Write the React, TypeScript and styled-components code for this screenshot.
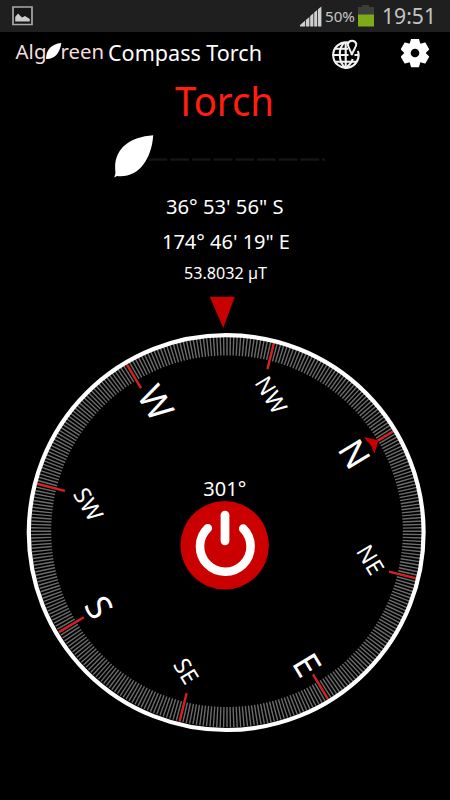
import React from "react";
import styled, { createGlobalStyle } from "styled-components";

const Global = createGlobalStyle`
  * { box-sizing: border-box; }
  body { margin: 0; background: #000; color: #fff; font-family: "Noto Sans", sans-serif; }
`;
const Screen = styled.main`
  width: 450px; height: 800px; overflow: hidden; background: #000;
  display: flex; flex-direction: column;
`;
const StatusBar = styled.div`
  height: 32px; background: #1f1f1f;
  display: flex; align-items: center; padding: 0 14px 0 12px; flex: none;
`;
const StatusIcons = styled.div`
  margin-left: auto; display: flex; align-items: center;
`;
const Label = styled.svg<{ $w: number; $h: number }>`
  display: block; flex: none; width: ${p => p.$w}px; height: ${p => p.$h}px; overflow: visible;
  font-family: "Noto Sans", sans-serif;
`;
const Icon = styled.svg<{ $w: number; $h: number }>`
  display: block; flex: none; width: ${p => p.$w}px; height: ${p => p.$h}px;
`;
const Battery = styled(Icon)`
  margin-left: 5px;
`;
const Header = styled.header`
  height: 44px; flex: none; display: flex; align-items: center; padding-left: 15px;
`;
const Brand = styled.div`
  display: flex; align-items: center; width: 94px; height: 44px; flex: none;
`;
const Actions = styled.div`
  margin-left: auto; display: flex; align-items: center; gap: 41px; padding-right: 20px;
`;
const Title = styled.h1`
  margin: 0; height: 52px; flex: none; font-weight: 400;
`;
const Slider = styled.div`
  height: 60px; flex: none; padding-left: 113px; display: flex;
`;
const Dial = styled.svg`
  display: block; width: 450px; height: 512px; flex: none;
  font-family: "Noto Sans", sans-serif;
`;

const TICK_CX = 227;
const TICK_CY = 531.2;
const HEADING = 301;
const DIRECTIONS = [
  { name: "N", x: 354.3, y: 454, size: 35, inner: 173 },
  { name: "NE", x: 370.3, y: 559.7, size: 23, inner: 167 },
  { name: "E", x: 307, y: 665, size: 35, inner: 167 },
  { name: "SE", x: 186, y: 671.2, size: 23, inner: 167 },
  { name: "S", x: 99, y: 607.2, size: 35, inner: 167 },
  { name: "SW", x: 88.3, y: 504.3, size: 23, inner: 167 },
  { name: "W", x: 155.7, y: 402.7, size: 36, inner: 167 },
  { name: "NW", x: 271, y: 395, size: 23, inner: 167 },
];

const spoke = (deg: number, r1: number, r2: number) => {
  const a = (deg * Math.PI) / 180;
  const s = Math.sin(a), c = Math.cos(a);
  return `M${TICK_CX + s * r1} ${TICK_CY - c * r1}L${TICK_CX + s * r2} ${TICK_CY - c * r2}`;
};
const TICKS = Array.from({ length: 360 }, (_, i) => spoke(i, 175.8, 196)).join("");

const Compass = () => (
  <Dial viewBox="0 288 450 512">
    <path d="M209.7 296.7H234.8L223.3 328Z" fill="#c90000" />
    <path d={TICKS} stroke="#6c6c6c" strokeWidth="1.4" fill="none" />
    {DIRECTIONS.map((d, i) => (
      <g key={d.name}>
        <path d={spoke(i * 45 + 360 - HEADING, d.inner, 196)} stroke="#d42222" strokeWidth="2.4" />
        <text
          transform={`translate(${d.x} ${d.y}) rotate(${360 - HEADING})`}
          y={d.size * 0.357} fontSize={d.size} textAnchor="middle" fill="#fff"
        >{d.name}</text>
      </g>
    ))}
    <circle cx="226.2" cy="532.6" r="197.4" fill="none" stroke="#fff" strokeWidth="4.2" />
    <path d="M363.6 437L378.6 440.2L374.3 453.5L371 445.5Z" fill="#c90000" />
    <text x="224.8" y="495.5" fontSize="20" textAnchor="middle" fill="#fff">{HEADING}°</text>
    <circle cx="224.7" cy="545.3" r="44.2" fill="#cb0000" />
    <path d="M207.8 528.2A25.3 25.3 0 1 0 243.2 528.6" fill="none" stroke="#fff" strokeWidth="8.6" strokeLinecap="round" />
    <path d="M225 515.2V540.8" stroke="#fff" strokeWidth="8.8" strokeLinecap="round" />
  </Dial>
);

const App = () => (
  <>
    <Global />
    <Screen>
      <StatusBar>
        <Icon $w={21} $h={20} viewBox="0 0 21 20">
          <path d="M1 1H20V18.5H1Z" fill="#161616" stroke="#aaa" strokeWidth="1.7" />
          <path d="M3.2 15.5V11L6 7.5L10 11.5L13 10L17.8 13V15.5Z" fill="#ccc" />
        </Icon>
        <StatusIcons>
          <Icon $w={22} $h={21} viewBox="0 0 22 21">
            <path d="M0 20.5V19L5 14.8V20.5ZM5.8 20.5V13.9L9.4 11V20.5ZM10.2 20.5V10.1L13.4 7.3V20.5ZM14.2 20.5V6.6L17.2 4V20.5ZM18 20.5V3.2L21.4 .4V20.5Z" fill="#cfcfcf" />
          </Icon>
          <Label $w={31} $h={32} viewBox="0 0 31 32">
            <text x="3" y="22" fontSize="15.3" textLength="30" lengthAdjust="spacingAndGlyphs" fill="#c4c4c4">50%</text>
          </Label>
          <Battery $w={16} $h={22} viewBox="0 0 16 22">
            <path d="M0 2H4V0H11V2H16V10H0Z" fill="#3d3d3d" />
            <path d="M0 9.5H16V21.5H0Z" fill="#7dab19" />
          </Battery>
          <Label $w={62} $h={32} viewBox="0 0 62 32">
            <text x="8" y="23.5" fontSize="22" textLength="54" lengthAdjust="spacingAndGlyphs" fill="#c4c4c4">19:51</text>
          </Label>
        </StatusIcons>
      </StatusBar>
      <Header>
        <Brand>
          <Label $w={94} $h={44} viewBox="15 32 94 44">
            <text x="15.5" y="58.5" fontSize="20" textLength="31" lengthAdjust="spacingAndGlyphs" fill="#f4dedc">Alg</text>
            <text x="60.5" y="58.5" fontSize="20" textLength="43.5" lengthAdjust="spacingAndGlyphs" fill="#f4dedc">reen</text>
            <path d="M46 59C46 50 51 44 61.3 43C60 53 54.5 59.5 46 59Z" fill="#fff" />
          </Label>
        </Brand>
        <Label $w={155} $h={44} viewBox="109 32 155 44">
          <text x="108" y="61" fontSize="22" textLength="154" lengthAdjust="spacingAndGlyphs" fill="#fff">Compass Torch</text>
        </Label>
        <Actions>
          <Icon $w={29} $h={32} viewBox="331 37 29 32">
            <g fill="none" stroke="#f2f2f2" strokeWidth="2.1">
              <path d="M348 41.6A12.7 12.7 0 1 0 357.9 50" />
              <path d="M345.7 41.5V67M332.5 54H348.5M354.5 54H358.5M335.3 47.7H348M335.4 60.7H356" />
              <path d="M344.5 41.5C338 47 338 61 345.5 67C350 63.5 352 61 352.6 58" />
            </g>
            <path d="M351.8 54C350.8 49 347.8 46.5 347.8 43A4.4 4.4 0 0 1 356.3 43C356.3 46.5 353 49 351.8 54Z" fill="#000" stroke="#f2f2f2" strokeWidth="2" />
          </Icon>
          <Icon $w={29} $h={31} viewBox="-14 -14 29 31">
            <g fill="#fff">
              {[0, 60, 120, 180, 240, 300].map(a => (
                <path key={a} transform={`rotate(${a})`} d="M-5 -8L-3.5 -13.6H3.5L5 -8Z" stroke="#fff" strokeWidth="1.2" strokeLinejoin="round" />
              ))}
              <circle r="10.7" />
            </g>
            <circle r="4.3" fill="#000" />
          </Icon>
        </Actions>
      </Header>
      <Title>
        <Label $w={450} $h={52} viewBox="0 76 450 52">
          <text x="175" y="116" fontSize="40" textLength="99" lengthAdjust="spacingAndGlyphs" fill="#ff1e10">Torch</text>
        </Label>
      </Title>
      <Slider>
        <Icon $w={214} $h={60} viewBox="113 128 214 60">
          <path d="M148.5 159.7H325" stroke="#161616" strokeWidth="2.3" strokeDasharray="18.8 2.9" />
          <path d="M114.3 177.5L115.5 173C112.5 150 128 137 153.2 135.2C151.5 161 137 178.5 117 176Z" fill="#fff" />
        </Icon>
      </Slider>
      <Label $w={450} $h={100} viewBox="0 188 450 100">
        <g fill="#fff">
          <text x="166" y="213.7" fontSize="20.5" textLength="117.5" lengthAdjust="spacingAndGlyphs">36° 53' 56" S</text>
          <text x="162" y="248.7" fontSize="20.5" textLength="128" lengthAdjust="spacingAndGlyphs">174° 46' 19" E</text>
          <text x="184" y="278.7" fontSize="16.5" textLength="83" lengthAdjust="spacingAndGlyphs">53.8032 µT</text>
        </g>
      </Label>
      <Compass />
    </Screen>
  </>
);

export default App;
